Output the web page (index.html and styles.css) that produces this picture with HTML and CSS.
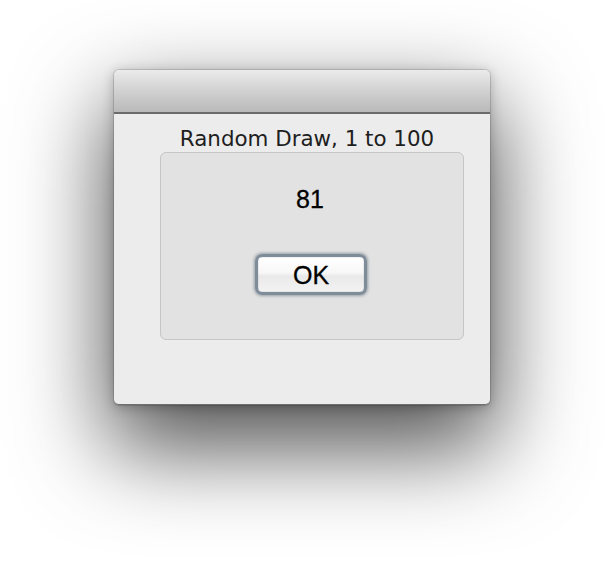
FILE: index.html
```html
<!DOCTYPE html>
<html>
<head>
<meta charset="utf-8">
<link rel="stylesheet" href="styles.css">
</head>
<body>
<div class="window">
  <div class="titlebar"></div>
  <div class="content">
    <div class="title">Random Draw, 1 to 100</div>
    <div class="panel">
      <div class="number">81</div>
      <button class="ok">OK</button>
    </div>
  </div>
</div>
</body>
</html>
```
FILE: styles.css
```css
html, body {
  margin: 0;
  padding: 0;
  background: #ffffff;
}
body {
  width: 604px;
  height: 562px;
  overflow: hidden;
  padding-top: 70px;
  padding-left: 114px;
  box-sizing: border-box;
}
.window {
  width: 376px;
  height: 335px;
  box-sizing: border-box;
  background: #ececec;
  border-radius: 5px;
  border-bottom: 1px solid #6f6f6f;
  box-shadow: 0 38px 90px 6px rgba(0, 0, 0, 0.68), 0 2px 12px rgba(0, 0, 0, 0.25), 0 0 0 1px rgba(0, 0, 0, 0.12);
  overflow: hidden;
}
.titlebar {
  height: 42px;
  border-bottom: 2px solid #6b6b6b;
  background: linear-gradient(#ebebeb, #d6d6d6 40%, #b9b9b9);
  border-radius: 5px 5px 0 0;
}
.content {
  padding: 13px 26px 0 46px;
}
.title {
  width: 294px;
  padding-right: 10px;
  text-align: center;
  font-family: "DejaVu Sans", sans-serif;
  font-size: 21.4px;
  line-height: 24px;
  height: 25px;
  color: #1e1e1e;
}
.panel {
  width: 304px;
  height: 188px;
  box-sizing: border-box;
  background: #e2e2e2;
  border: 1px solid #c6c6c6;
  border-radius: 6px;
  padding-top: 31px;
  display: flex;
  flex-direction: column;
  align-items: center;
}
.number {
  font-family: "Liberation Sans", Arial, sans-serif;
  font-size: 25px;
  line-height: 30px;
  color: #000000;
  margin-left: -4px;
  -webkit-text-stroke: 0.3px #000;
}
.ok {
  margin-top: 40px;
  margin-left: -2px;
  width: 112px;
  height: 41px;
  box-sizing: border-box;
  border: 3px solid #7f8c99;
  border-radius: 7px;
  background: linear-gradient(#ffffff, #f7f7f7 45%, #e9e9e9 55%, #f3f3f3);
  box-shadow: 0 0 3px 1px rgba(90, 105, 120, 0.55), inset 0 0 1px #5a6878;
  font-family: "Liberation Sans", Arial, sans-serif;
  font-size: 25px;
  line-height: 30px;
  color: #000000;
  -webkit-text-stroke: 0.3px #000;
  padding: 0;
  display: flex;
  align-items: center;
  justify-content: center;
}
```
